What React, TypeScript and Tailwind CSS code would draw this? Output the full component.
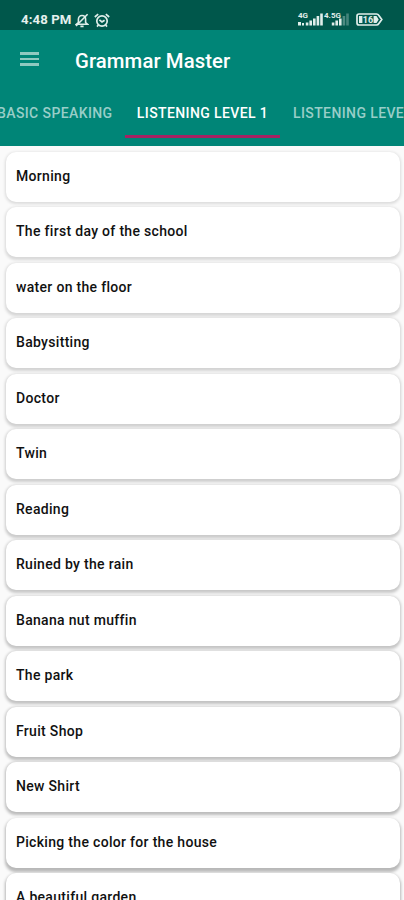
import React from "react";

const lessons = [
  "Morning",
  "The first day of the school",
  "water on the floor",
  "Babysitting",
  "Doctor",
  "Twin",
  "Reading",
  "Ruined by the rain",
  "Banana nut muffin",
  "The park",
  "Fruit Shop",
  "New Shirt",
  "Picking the color for the house",
  "A beautiful garden",
];

function BellOffIcon() {
  return (
    <svg width="14" height="15" viewBox="0 0 14 15" fill="none" stroke="#e0eeea" strokeWidth="1.6">
      <path d="M1.6 11.2 3.4 9.5V6.2C3.4 3.9 5 2.5 7 2.5s3.6 1.4 3.6 3.7v3.3l1.8 1.7Z" />
      <path d="M5.4 13.4h3.2M1 13 12.6 1.2" />
    </svg>
  );
}

function AlarmIcon() {
  return (
    <svg width="16" height="15" viewBox="0 0 16 15" fill="none" stroke="#e0eeea" strokeWidth="1.7">
      <circle cx="8" cy="8" r="5.2" />
      <path d="M.8 4 4.2 1.2M15.2 4l-3.4-2.8M5.4 6.8 8 9l2.6-1.8M4.4 12l-1.4 1.6M11.6 12l1.4 1.6" />
    </svg>
  );
}

interface SignalProps {
  label: string;
  weak?: boolean;
}

function Signal({ label, weak }: SignalProps) {
  return (
    <svg
      width={26}
      height={15}
      viewBox="0 0 26 15"
      fill="#e0eeea"
      className="overflow-visible"
    >
      <text x="0" y="6.3" fontSize="8" fontWeight="700" fontFamily="Roboto, sans-serif">
        {label}
      </text>
      {!weak && <path d="M0 10h3v3.5H0zM4 11h2v2.5H4z" />}
      <path d="M7.8 10.5h2.6v3H7.8zM11.4 8.5H14v5h-2.6zM15 6.5h2.6v7H15z" />
      <path d="M18.6 4h2.6v9.5h-2.6z" opacity={weak ? 0.35 : 1} />
      <path d="M22.2 1.5h2.6v12h-2.6z" opacity={weak ? 0.3 : 1} />
    </svg>
  );
}

function BatteryIcon() {
  return (
    <svg width="27" height="13" viewBox="0 0 27 13">
      <path
        d="M3 1h17.5q1.5 0 2.2 1.2L25.8 6.5 22.7 10.8Q22 12 20.5 12H3Q1 12 1 10V3Q1 1 3 1Z"
        fill="none"
        stroke="#e0eeea"
        strokeWidth="1.7"
      />
      <path d="M3 3h3.4v7H3zM17.6 3h2.9l2.2 3.5L20.5 10h-2.9z" fill="#e0eeea" />
      <text x="6.8" y="9.8" fontSize="9" fontWeight="700" fontFamily="Roboto, sans-serif" fill="#e0eeea">
        16
      </text>
    </svg>
  );
}

function StatusBar() {
  return (
    <div className="flex h-[30px] items-start justify-between bg-[#00574b] pl-[21px] pr-[21px] pt-3">
      <div className="flex items-center">
        <span className="w-[54px] whitespace-nowrap text-[13.2px] leading-4 font-bold tracking-[0.1px] text-[#e6f0ee]">
          4:48 PM
        </span>
        <BellOffIcon />
        <span className="ml-[5px]">
          <AlarmIcon />
        </span>
      </div>
      <div className="flex items-center">
        <Signal label="4G" />
        <Signal label="4.5G" weak />
        <span className="ml-1.5">
          <BatteryIcon />
        </span>
      </div>
    </div>
  );
}

function Header() {
  return (
    <header className="h-[116px] bg-[#008577]">
      <div className="flex h-[60px] items-center pl-5">
        <button className="mb-[2px] flex w-[19px] flex-col gap-[3px]" aria-label="Open menu">
          <span className="h-[2.7px] w-full bg-[#8fc9c0]" />
          <span className="h-[2.7px] w-full bg-[#8fc9c0]" />
          <span className="h-[2.7px] w-full bg-[#8fc9c0]" />
        </button>
        <h1 className="ml-9 pt-0.5 text-[20.3px] font-medium tracking-[0.1px] text-white">
          Grammar Master
        </h1>
      </div>
      <nav className="-ml-4 flex h-12 w-[420px] overflow-hidden whitespace-nowrap text-[14px] leading-[47px] font-medium tracking-[0.39px] text-[#99cec8]">
        <div className="w-[141px] shrink-0 pl-[13px]">BASIC SPEAKING</div>
        <div className="w-[155px] shrink-0 border-b-[3px] border-[#a52263] text-center text-white">
          LISTENING LEVEL 1
        </div>
        <div className="shrink-0 pl-[13px]">LISTENING LEVEL 2</div>
      </nav>
    </header>
  );
}

export default function App() {
  return (
    <div className="h-[900px] w-[404px] overflow-hidden bg-[#fafafa] font-['Roboto',sans-serif]">
      <StatusBar />
      <Header />
      <ul className="flex flex-col gap-[5.5px] pl-1.5 pr-1 pt-[5.5px]">
        {lessons.map((lesson, i) => (
          <li
            key={lesson}
            className="flex h-[50px] items-center rounded-[10px] bg-white pb-px pl-2.5 text-[14px] font-medium tracking-[0.31px] text-[#111]"
            // elevation gets stronger further down the screen
            style={{
              boxShadow: `0 ${1 + i * 0.09}px 3px 1px rgba(0,0,0,${0.12 + i * 0.012})`,
            }}
          >
            {lesson}
          </li>
        ))}
      </ul>
    </div>
  );
}
